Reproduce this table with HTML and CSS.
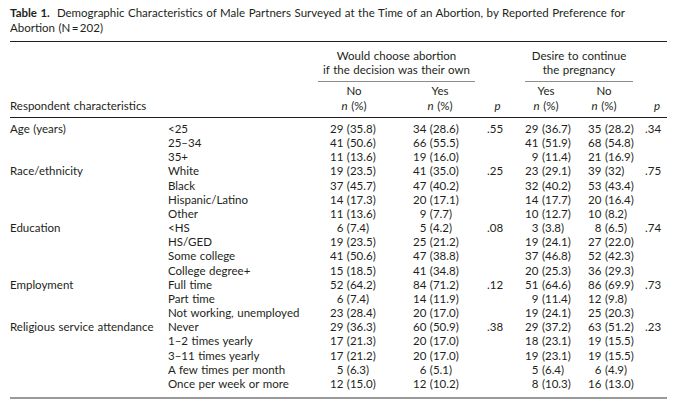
FILE: index.html
```html
<!DOCTYPE html>
<html lang="en">
<head>
<meta charset="utf-8">
<title>Table 1</title>
<link rel="stylesheet" href="styles.css">
</head>
<body>
<div class="page">
  <p class="caption"><b>Table 1.</b>&nbsp; Demographic Characteristics of Male Partners Surveyed at the Time of an Abortion, by Reported Preference for<br>Abortion (N&#8201;=&#8201;202)</p>
  <table class="tbl">
    <colgroup>
      <col class="c-a"><col class="c-b"><col class="c-c"><col class="c-d"><col class="c-e"><col class="c-f"><col class="c-g"><col class="c-h">
    </colgroup>
    <thead>
      <tr class="h1">
        <th></th><th></th>
        <th colspan="2" class="grp"><div class="grp1">Would choose abortion<br>if the decision was their own</div></th>
        <th></th>
        <th colspan="2" class="grp"><div class="grp2">Desire to continue<br>the pregnancy</div></th>
        <th></th>
      </tr>
      <tr class="h2">
        <th class="lbl">Respondent characteristics</th>
        <th></th>
        <th class="hc">No<br><i>n</i> (%)</th>
        <th class="hd">Yes<br><i>n</i> (%)</th>
        <th class="he"><i>p</i></th>
        <th class="hf">Yes<br><i>n</i> (%)</th>
        <th class="hg">No<br><i>n</i> (%)</th>
        <th class="hh"><i>p</i></th>
      </tr>
    </thead>
    <tbody>
      <tr class="first"><td>Age (years)</td><td>&lt;25</td><td><span class="k">29</span> (35.8)</td><td><span class="k">34</span> (28.6)</td><td>.55</td><td><span class="k">29</span> (36.7)</td><td><span class="k">35</span> (28.2)</td><td>.34</td></tr>
      <tr><td></td><td>25–34</td><td><span class="k">41</span> (50.6)</td><td><span class="k">66</span> (55.5)</td><td></td><td><span class="k">41</span> (51.9)</td><td><span class="k">68</span> (54.8)</td><td></td></tr>
      <tr><td></td><td>35+</td><td><span class="k">11</span> (13.6)</td><td><span class="k">19</span> (16.0)</td><td></td><td><span class="k">9</span> (11.4)</td><td><span class="k">21</span> (16.9)</td><td></td></tr>
      <tr><td>Race/ethnicity</td><td>White</td><td><span class="k">19</span> (23.5)</td><td><span class="k">41</span> (35.0)</td><td>.25</td><td><span class="k">23</span> (29.1)</td><td><span class="k">39</span> (32)</td><td>.75</td></tr>
      <tr><td></td><td>Black</td><td><span class="k">37</span> (45.7)</td><td><span class="k">47</span> (40.2)</td><td></td><td><span class="k">32</span> (40.2)</td><td><span class="k">53</span> (43.4)</td><td></td></tr>
      <tr><td></td><td>Hispanic/Latino</td><td><span class="k">14</span> (17.3)</td><td><span class="k">20</span> (17.1)</td><td></td><td><span class="k">14</span> (17.7)</td><td><span class="k">20</span> (16.4)</td><td></td></tr>
      <tr><td></td><td>Other</td><td><span class="k">11</span> (13.6)</td><td><span class="k">9</span> (7.7)</td><td></td><td><span class="k">10</span> (12.7)</td><td><span class="k">10</span> (8.2)</td><td></td></tr>
      <tr><td>Education</td><td>&lt;HS</td><td><span class="k">6</span> (7.4)</td><td><span class="k">5</span> (4.2)</td><td>.08</td><td><span class="k">3</span> (3.8)</td><td><span class="k">8</span> (6.5)</td><td>.74</td></tr>
      <tr><td></td><td>HS/GED</td><td><span class="k">19</span> (23.5)</td><td><span class="k">25</span> (21.2)</td><td></td><td><span class="k">19</span> (24.1)</td><td><span class="k">27</span> (22.0)</td><td></td></tr>
      <tr><td></td><td>Some college</td><td><span class="k">41</span> (50.6)</td><td><span class="k">47</span> (38.8)</td><td></td><td><span class="k">37</span> (46.8)</td><td><span class="k">52</span> (42.3)</td><td></td></tr>
      <tr><td></td><td>College degree+</td><td><span class="k">15</span> (18.5)</td><td><span class="k">41</span> (34.8)</td><td></td><td><span class="k">20</span> (25.3)</td><td><span class="k">36</span> (29.3)</td><td></td></tr>
      <tr><td>Employment</td><td>Full time</td><td><span class="k">52</span> (64.2)</td><td><span class="k">84</span> (71.2)</td><td>.12</td><td><span class="k">51</span> (64.6)</td><td><span class="k">86</span> (69.9)</td><td>.73</td></tr>
      <tr><td></td><td>Part time</td><td><span class="k">6</span> (7.4)</td><td><span class="k">14</span> (11.9)</td><td></td><td><span class="k">9</span> (11.4)</td><td><span class="k">12</span> (9.8)</td><td></td></tr>
      <tr><td></td><td>Not working, unemployed</td><td><span class="k">23</span> (28.4)</td><td><span class="k">20</span> (17.0)</td><td></td><td><span class="k">19</span> (24.1)</td><td><span class="k">25</span> (20.3)</td><td></td></tr>
      <tr><td>Religious service attendance</td><td>Never</td><td><span class="k">29</span> (36.3)</td><td><span class="k">60</span> (50.9)</td><td>.38</td><td><span class="k">29</span> (37.2)</td><td><span class="k">63</span> (51.2)</td><td>.23</td></tr>
      <tr><td></td><td>1–2 times yearly</td><td><span class="k">17</span> (21.3)</td><td><span class="k">20</span> (17.0)</td><td></td><td><span class="k">18</span> (23.1)</td><td><span class="k">19</span> (15.5)</td><td></td></tr>
      <tr><td></td><td>3–11 times yearly</td><td><span class="k">17</span> (21.2)</td><td><span class="k">20</span> (17.0)</td><td></td><td><span class="k">19</span> (23.1)</td><td><span class="k">19</span> (15.5)</td><td></td></tr>
      <tr><td></td><td>A few times per month</td><td><span class="k">5</span> (6.3)</td><td><span class="k">6</span> (5.1)</td><td></td><td><span class="k">5</span> (6.4)</td><td><span class="k">6</span> (4.9)</td><td></td></tr>
      <tr class="last"><td></td><td>Once per week or more</td><td><span class="k">12</span> (15.0)</td><td><span class="k">12</span> (10.2)</td><td></td><td><span class="k">8</span> (10.3)</td><td><span class="k">16</span> (13.0)</td><td></td></tr>
    </tbody>
  </table>
</div>
</body>
</html>
```

FILE: styles.css
```css
html, body {
  margin: 0;
  background: #ffffff;
}

body {
  font-family: "Lato", "Open Sans", sans-serif;
  font-size: 11.5px;
  word-spacing: 0.6px;
  color: #231f20;
}

.page {
  padding: 0 10px;
}

.caption {
  margin: 0;
  padding-top: 5px;
  line-height: 15px;
  white-space: nowrap;
}

.caption b {
  font-weight: 700;
}

.tbl {
  margin-top: 6px;
  width: 657px;
  table-layout: fixed;
  border-collapse: collapse;
  border-top: 1px solid #231f20;
  border-bottom: 2px solid #9a9a9a;
}

.c-a { width: 158px; }
.c-b { width: 157px; }
.c-c { width: 70px; }
.c-d { width: 90px; }
.c-e { width: 25px; }
.c-f { width: 72px; }
.c-g { width: 58px; }
.c-h { width: 27px; }

th, td {
  padding: 0;
  font-weight: 400;
  white-space: nowrap;
  text-align: left;
}

th {
  vertical-align: bottom;
  line-height: 14.2px;
}

.h1 th {
  padding-top: 7px;
  padding-bottom: 2px;
}

.grp1,
.grp2 {
  text-align: center;
  padding-bottom: 4px;
  border-bottom: 1.5px solid #8c8c8c;
}

.grp1 {
  margin: 0 10px 0 -7px;
}

.grp2 {
  margin: 0 7px 0 15px;
}

.h2 th {
  padding-bottom: 4px;
  border-bottom: 1px solid #231f20;
  text-align: center;
}

.h2 th.lbl {
  text-align: left;
}

.h2 .hc { padding-right: 12px; }
.h2 .hg { padding-right: 14px; }
.h2 .hh { padding-left: 9px; padding-right: 2px; }

td {
  line-height: 14.17px;
  vertical-align: top;
}

td:nth-child(3) { padding-left: 5px; }
td:nth-child(4) { padding-left: 18px; }
td:nth-child(5) { padding-left: 2px; }
td:nth-child(6) { padding-left: 15px; }
td:nth-child(7) { padding-left: 6px; }
td:nth-child(8) { padding-left: 5px; }

.first td { padding-top: 4px; }
.last td { padding-bottom: 6px; }

.k {
  display: inline-block;
  width: 2ch;
  text-align: right;
}
```
